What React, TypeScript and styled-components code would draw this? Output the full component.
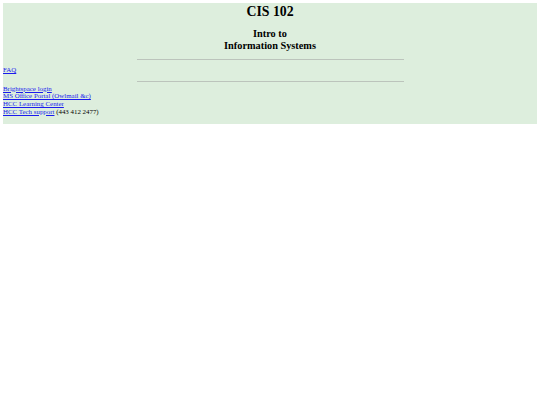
import styled, { createGlobalStyle } from "styled-components";

const GlobalStyle = createGlobalStyle`
  html, body {
    margin: 0;
    padding: 0;
    background: #ffffff;
  }
  body {
    font-family: "Liberation Serif", "Times New Roman", serif;
    color: #000000;
  }
`;

const Panel = styled.div`
  margin: 3px;
  background-color: #ddeedd;
  display: flex;
  flex-direction: column;
  padding: 1px 0 8px;
`;

const Title = styled.h1`
  margin: 0;
  font-size: 13.8px;
  line-height: 16px;
  font-weight: bold;
  text-align: center;
`;

const Subtitle = styled.h2`
  margin: 8px 0 0;
  font-size: 10.3px;
  line-height: 11.5px;
  font-weight: bold;
  text-align: center;
`;

const Rule = styled.hr<{ $gap: number }>`
  width: 50%;
  margin: ${(p) => p.$gap}px auto 0;
  border: none;
  border-top: 1px solid #bcc4bc;
  height: 0;
`;

const Section = styled.div<{ $gap: number }>`
  margin-top: ${(p) => p.$gap}px;
  font-size: 6.9px;
  line-height: 7.7px;
  display: flex;
  flex-direction: column;
  align-items: flex-start;
`;

const Row = styled.div`
  white-space: nowrap;
`;

const Link = styled.a`
  color: #1a1aee;
  text-decoration: underline;
`;

const links = [
  { label: "Brightspace login" },
  { label: "MS Office Portal (Owlmail &c)" },
  { label: "HCC Learning Center" },
  { label: "HCC Tech support", extra: " (443 412 2477)" },
];

const App = () => {
  return (
    <>
      <GlobalStyle />
      <Panel>
        <Title>CIS 102</Title>
        <Subtitle>
          Intro to
          <br />
          Information Systems
        </Subtitle>
        <Rule $gap={8} />
        <Section $gap={6}>
          <Row>
            <Link href="#">FAQ</Link>
          </Row>
        </Section>
        <Rule $gap={7} />
        <Section $gap={3}>
          {links.map((l) => (
            <Row key={l.label}>
              <Link href="#">{l.label}</Link>
              {l.extra}
            </Row>
          ))}
        </Section>
      </Panel>
    </>
  );
};

export default App;
